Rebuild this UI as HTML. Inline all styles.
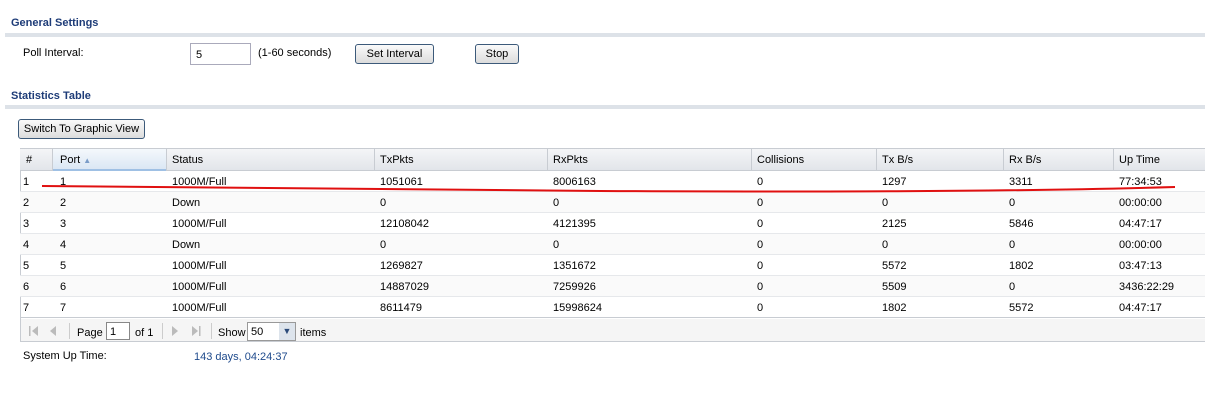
<!DOCTYPE html>
<html><head><style>
*{margin:0;padding:0;box-sizing:border-box}
body{width:1205px;height:408px;background:#fff;font-family:"Liberation Sans",Arial,sans-serif;font-size:11px;color:#000;position:relative;overflow:hidden}
.a{position:absolute;white-space:nowrap}
.h{font-weight:bold;color:#1e3c78;font-size:11px}
.bar{position:absolute;left:5px;right:0;height:4px;background:#dde2e8}
.btn{position:absolute;border:1px solid #3c5a7a;border-radius:3px;background:linear-gradient(#fafafa,#dcdcdc);font-size:11px;text-align:center;line-height:18px;height:20px;white-space:nowrap}
.t{font-size:11px}
.hdr{position:absolute;left:20px;right:0;top:148px;height:23px;background:linear-gradient(#f4f5f7,#e2e5ea);border-top:1px solid #c8ccd2;border-bottom:1px solid #c8ccd2}
.row{position:absolute;left:20px;right:0;height:21px;border-bottom:1px solid #e6e8eb}
.cell{position:absolute;top:1px;line-height:20px}
.vs{position:absolute;top:0;height:22px;width:1px;background:#c8ccd2}
</style></head><body>
<div class="a h" style="left:11px;top:17px">General Settings</div>
<div class="bar" style="top:33px"></div>
<div class="a" style="left:23px;top:47px">Poll Interval:</div>
<div class="a" style="left:190px;top:43px;width:61px;height:22px;border:1px solid #aab;padding:5px 5px 0">5</div>
<div class="a" style="left:258px;top:47px">(1-60 seconds)</div>
<div class="btn" style="left:355px;top:44px;width:79px">Set Interval</div>
<div class="btn" style="left:475px;top:44px;width:44px">Stop</div>
<div class="a h" style="left:11px;top:90px">Statistics Table</div>
<div class="bar" style="top:105px"></div>
<div class="btn" style="left:18px;top:119px;width:127px;height:20px">Switch To Graphic View</div>

<div class="a" style="left:20px;top:148px;right:0;height:194px;border-left:1px solid #c8ccd2"></div>
<div class="hdr t">
<div class="a" style="left:32px;top:0;width:114px;height:22px;background:linear-gradient(#f4f8fc,#dbe7f4);border-bottom:2px solid #9fc0e4"></div>
<div class="cell" style="left:6px">#</div>
<div class="cell" style="left:40px">Port <span style="color:#7a9cc8;font-size:8px">▲</span></div>
<div class="cell" style="left:152px">Status</div>
<div class="cell" style="left:360px">TxPkts</div>
<div class="cell" style="left:533px">RxPkts</div>
<div class="cell" style="left:737px">Collisions</div>
<div class="cell" style="left:862px">Tx B/s</div>
<div class="cell" style="left:989px">Rx B/s</div>
<div class="cell" style="left:1099px">Up Time</div>
<div class="vs" style="left:32px"></div><div class="vs" style="left:146px"></div><div class="vs" style="left:354px"></div><div class="vs" style="left:527px"></div><div class="vs" style="left:731px"></div><div class="vs" style="left:856px"></div><div class="vs" style="left:983px"></div><div class="vs" style="left:1093px"></div>
</div>
<div class="t">
<div class="row" style="top:171px"><div class="cell" style="left:3px">1</div><div class="cell" style="left:40px">1</div><div class="cell" style="left:152px">1000M/Full</div><div class="cell" style="left:360px">1051061</div><div class="cell" style="left:533px">8006163</div><div class="cell" style="left:737px">0</div><div class="cell" style="left:862px">1297</div><div class="cell" style="left:989px">3311</div><div class="cell" style="left:1099px">77:34:53</div></div>
<div class="row" style="top:192px;background:#fafafa"><div class="cell" style="left:3px">2</div><div class="cell" style="left:40px">2</div><div class="cell" style="left:152px">Down</div><div class="cell" style="left:360px">0</div><div class="cell" style="left:533px">0</div><div class="cell" style="left:737px">0</div><div class="cell" style="left:862px">0</div><div class="cell" style="left:989px">0</div><div class="cell" style="left:1099px">00:00:00</div></div>
<div class="row" style="top:213px"><div class="cell" style="left:3px">3</div><div class="cell" style="left:40px">3</div><div class="cell" style="left:152px">1000M/Full</div><div class="cell" style="left:360px">12108042</div><div class="cell" style="left:533px">4121395</div><div class="cell" style="left:737px">0</div><div class="cell" style="left:862px">2125</div><div class="cell" style="left:989px">5846</div><div class="cell" style="left:1099px">04:47:17</div></div>
<div class="row" style="top:234px;background:#fafafa"><div class="cell" style="left:3px">4</div><div class="cell" style="left:40px">4</div><div class="cell" style="left:152px">Down</div><div class="cell" style="left:360px">0</div><div class="cell" style="left:533px">0</div><div class="cell" style="left:737px">0</div><div class="cell" style="left:862px">0</div><div class="cell" style="left:989px">0</div><div class="cell" style="left:1099px">00:00:00</div></div>
<div class="row" style="top:255px"><div class="cell" style="left:3px">5</div><div class="cell" style="left:40px">5</div><div class="cell" style="left:152px">1000M/Full</div><div class="cell" style="left:360px">1269827</div><div class="cell" style="left:533px">1351672</div><div class="cell" style="left:737px">0</div><div class="cell" style="left:862px">5572</div><div class="cell" style="left:989px">1802</div><div class="cell" style="left:1099px">03:47:13</div></div>
<div class="row" style="top:276px;background:#fafafa"><div class="cell" style="left:3px">6</div><div class="cell" style="left:40px">6</div><div class="cell" style="left:152px">1000M/Full</div><div class="cell" style="left:360px">14887029</div><div class="cell" style="left:533px">7259926</div><div class="cell" style="left:737px">0</div><div class="cell" style="left:862px">5509</div><div class="cell" style="left:989px">0</div><div class="cell" style="left:1099px">3436:22:29</div></div>
<div class="row" style="top:297px;border-bottom:1px solid #c8ccd2"><div class="cell" style="left:3px">7</div><div class="cell" style="left:40px">7</div><div class="cell" style="left:152px">1000M/Full</div><div class="cell" style="left:360px">8611479</div><div class="cell" style="left:533px">15998624</div><div class="cell" style="left:737px">0</div><div class="cell" style="left:862px">1802</div><div class="cell" style="left:989px">5572</div><div class="cell" style="left:1099px">04:47:17</div></div>
</div>
<div class="a" style="left:20px;top:319px;right:0;height:23px;background:#f5f5f5;border-bottom:1px solid #c8ccd2;border-left:1px solid #c8ccd2"></div>
<svg class="a" style="left:28px;top:325px" width="190" height="12">
<rect x="1" y="1" width="1.5" height="10" fill="#bbb"/><path d="M10 1 L4 6 L10 11Z" fill="#bbb"/>
<path d="M28 1 L22 6 L28 11Z" fill="#bbb"/>
<path d="M144 1 L150 6 L144 11Z" fill="#bbb"/>
<path d="M164 1 L170 6 L164 11Z" fill="#bbb"/><rect x="171" y="1" width="1.5" height="10" fill="#bbb"/>
</svg>
<div class="a" style="left:69px;top:323px;width:1px;height:16px;background:#ccc"></div>
<div class="a t" style="left:77px;top:327px">Page</div>
<div class="a t" style="left:106px;top:322px;width:24px;height:18px;border:1px solid #888;background:#fff;padding:3px 3px 0">1</div>
<div class="a t" style="left:135px;top:327px">of 1</div>
<div class="a" style="left:162px;top:323px;width:1px;height:16px;background:#ccc"></div>
<div class="a" style="left:211px;top:323px;width:1px;height:16px;background:#ccc"></div>
<div class="a t" style="left:218px;top:327px">Show</div>
<div class="a t" style="left:247px;top:322px;width:49px;height:19px;border:1px solid #999;background:#fff;padding:3px 3px 0">50</div>
<div class="a" style="left:279px;top:323px;width:16px;height:17px;background:#dde4ec;color:#2a4a7a;font-size:9px;text-align:center;line-height:17px">▼</div>
<div class="a t" style="left:300px;top:327px">items</div>
<div class="a" style="left:23px;top:350px">System Up Time:</div>
<div class="a" style="left:194px;top:351px;color:#1e4a8c">143 days, 04:24:37</div>
<svg class="a" style="left:0;top:0" width="1205" height="408"><path d="M42 186 C200 189 400 190 600 191 S1000 192 1175 187" stroke="#e01010" stroke-width="2" fill="none"/></svg>
</body></html>
